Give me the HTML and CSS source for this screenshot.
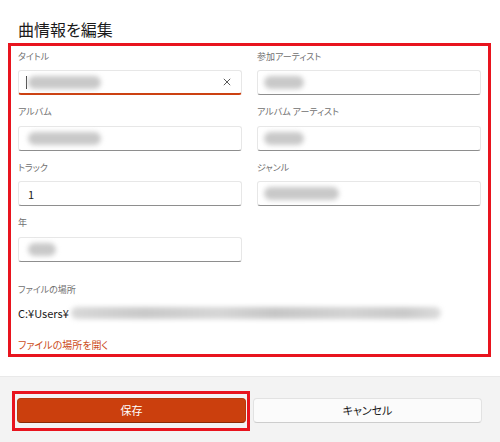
FILE: index.html
```html
<!DOCTYPE html>
<html lang="ja">
<head>
<meta charset="utf-8">
<title>曲情報を編集</title>
<link rel="stylesheet" href="styles.css">
</head>
<body>
<div class="dialog">
  <h1 class="title">曲情報を編集</h1>
  <div class="panel">
    <div class="grid">
      <div class="field">
        <div class="label">タイトル</div>
        <div class="input focused">
          <span class="caret"></span>
          <span class="blob blob-long"></span>
          <svg class="clear" width="8" height="8" viewBox="0 0 8 8"><path d="M0.8 0.8 L7.2 7.2 M7.2 0.8 L0.8 7.2" stroke="#5a5a5a" stroke-width="1" fill="none"/></svg>
        </div>
      </div>
      <div class="field">
        <div class="label">参加アーティスト</div>
        <div class="input"><span class="blob blob-short"></span></div>
      </div>
      <div class="field">
        <div class="label">アルバム</div>
        <div class="input"><span class="blob blob-long"></span></div>
      </div>
      <div class="field">
        <div class="label">アルバム アーティスト</div>
        <div class="input"><span class="blob blob-short"></span></div>
      </div>
      <div class="field">
        <div class="label">トラック</div>
        <div class="input"><span class="value">1</span></div>
      </div>
      <div class="field">
        <div class="label">ジャンル</div>
        <div class="input"><span class="blob blob-genre"></span></div>
      </div>
      <div class="field">
        <div class="label">年</div>
        <div class="input"><span class="blob blob-year"></span></div>
      </div>
    </div>
    <div class="file">
      <div class="label">ファイルの場所</div>
      <div class="path">C:¥Users¥<span class="blob blob-path"></span></div>
      <a class="link">ファイルの場所を開く</a>
    </div>
  </div>
  <div class="footer">
    <div class="save-wrap"><button class="btn btn-save">保存</button></div>
    <button class="btn btn-cancel">キャンセル</button>
  </div>
</div>
</body>
</html>
```
FILE: styles.css
```css
html, body {
  margin: 0;
  padding: 0;
}
body {
  width: 500px;
  height: 442px;
  overflow: hidden;
  background: #ffffff;
  font-family: "Noto Sans CJK JP", "Noto Sans", sans-serif;
  color: #1a1a1a;
}
.dialog {
  height: 442px;
  display: flex;
  flex-direction: column;
}
.title {
  margin: 0;
  padding: 19px 0 0 18px;
  height: 24px;
  font-size: 16px;
  line-height: 20px;
  font-weight: 400;
  color: #1b1b1b;
  font-feature-settings: "palt";
}
.panel {
  margin: 0 9px 0 8px;
  border: 3px solid #e8141e;
  padding: 3.5px 7px 1px 7px;
}
.grid {
  display: grid;
  grid-template-columns: 1fr 1fr;
  column-gap: 15px;
  row-gap: 10px;
}
.label {
  font-size: 9px;
  line-height: 14px;
  color: #707070;
  font-feature-settings: "palt";
}
.field .label {
  margin-bottom: 6.5px;
}
.input {
  position: relative;
  height: 25px;
  box-sizing: border-box;
  border: 1px solid #e7e7e7;
  border-bottom: 1px solid #8e8e8e;
  border-radius: 3px;
  background: #ffffff;
  display: flex;
  align-items: center;
  padding-left: 9px;
}
.input.focused {
  padding-left: 7px;
  border-bottom: 2px solid #cc4112;
}
.caret {
  width: 1px;
  height: 13px;
  background: #444;
  margin-right: 1px;
}
.value {
  font-size: 11px;
  color: #1a1a1a;
}
.blob {
  display: block;
  height: 13px;
  border-radius: 7px;
  background: #c9c9c9;
  filter: blur(2.5px);
}
.blob-long { width: 73px; }
.blob-short { width: 40px; margin-left: -3px; }
.blob-genre { width: 75px; margin-left: -3px; }
.blob-year { width: 28px; }
.blob-path {
  width: 370px;
  margin-left: 2px;
  height: 12px;
  background: linear-gradient(90deg, #d8d8d8, #c9c9c9 20%, #d6d6d6 40%, #c6c6c6 55%, #d3d3d3 75%, #c9c9c9 90%, #dcdcdc);
}
.clear {
  margin-left: auto;
  margin-right: 10px;
}
.file {
  margin-top: 21.5px;
}
.path {
  margin-top: 7.5px;
  font-size: 11px;
  line-height: 16px;
  color: #1a1a1a;
  display: flex;
  align-items: center;
}
.link {
  display: block;
  margin-top: 16.5px;
  font-size: 10px;
  line-height: 16px;
  color: #cc4d22;
  font-feature-settings: "palt";
}
.footer {
  margin-top: 19px;
  flex: 1;
  background: #f3f3f3;
  border-top: 1px solid #e9e9e9;
  padding: 21px 18px 0 17px;
  display: grid;
  grid-template-columns: 1fr 1fr;
  column-gap: 7px;
  align-content: start;
}
.save-wrap {
  position: relative;
}
.save-wrap::after {
  content: "";
  position: absolute;
  left: -5px;
  right: -4px;
  top: -7px;
  bottom: -8px;
  border: 3px solid #e8141e;
  pointer-events: none;
}
.btn {
  display: block;
  width: 100%;
  height: 25px;
  box-sizing: border-box;
  border-radius: 4px;
  font-family: "Noto Sans CJK JP", "Noto Sans", sans-serif;
  font-size: 11px;
  line-height: 1;
  padding: 0;
  font-feature-settings: "palt";
}
.btn-save {
  background: #cb3f0d;
  color: #ffffff;
  border: 1px solid #b9390c;
  border-bottom: 1px solid #8a2a06;
}
.btn-cancel {
  background: #fbfbfb;
  color: #1a1a1a;
  border: 1px solid #e2e2e2;
  border-bottom-color: #cdcdcd;
}
```
